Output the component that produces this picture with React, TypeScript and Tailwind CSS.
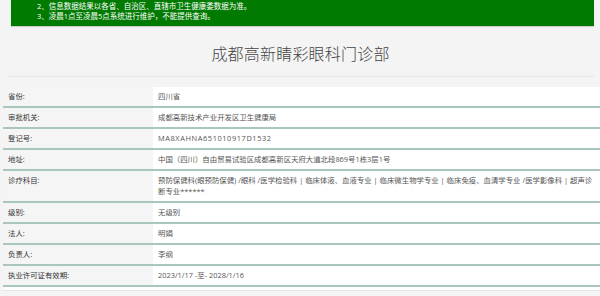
const rows: { label: string; value: string; wide?: boolean }[] = [
  { label: "省份:", value: "四川省" },
  { label: "审批机关:", value: "成都高新技术产业开发区卫生健康局" },
  { label: "登记号:", value: "MA8XAHNA651010917D1532", wide: true },
  { label: "地址:", value: "中国（四川）自由贸易试验区成都高新区天府大道北段869号1栋3层1号" },
  {
    label: "诊疗科目:",
    value:
      "预防保健科(眼预防保健) /眼科 /医学检验科 | 临床体液、血液专业 | 临床微生物学专业 | 临床免疫、血清学专业 /医学影像科 | 超声诊断专业******",
  },
  { label: "级别:", value: "无级别" },
  { label: "法人:", value: "明娟" },
  { label: "负责人:", value: "李纲" },
  { label: "执业许可证有效期:", value: "2023/1/17 -至- 2028/1/16" },
];

export default function App() {
  return (
    <div
      className="w-[600px] h-[296px] overflow-hidden bg-[#f4f4f4]"
      style={{ fontFamily: '"Open Sans", "Noto Sans CJK SC", sans-serif' }}
    >
      {/* notice banner, first line scrolled out of view */}
      <div className="ml-[11px] mr-[6px] bg-[#007a00] pl-[26px] pt-px pb-[5px] text-white text-[7.5px] leading-[10px] shadow-[0_1px_1px_rgba(0,0,0,0.15)]">
        <p>2、信息数据结果以各省、自治区、直辖市卫生健康委数据为准。</p>
        <p>3、凌晨1点至凌晨5点系统进行维护，不能提供查询。</p>
      </div>

      <div className="ml-[7px] mr-[6px] h-[51px] flex items-center justify-center border-b border-[#e6e6e6] pt-[5px]">
        <h1 className="text-[16px] font-light text-[#444] tracking-[0.2px]">成都高新睛彩眼科门诊部</h1>
      </div>

      <div className="mt-[10px] ml-[3px] text-[7.4px] leading-[11px]">
        {rows.map((r) => (
          <div key={r.label} className="flex border-b-2 border-[#a9c7bd]">
            <div className="w-[150px] shrink-0 bg-[#f5f5f5] pl-[5px] py-[4px] text-[#333]">{r.label}</div>
            <div
              className={
                "flex-1 bg-white pl-[5px] pr-[3px] py-[4px] text-[#555]" + (r.wide ? " tracking-[0.6px]" : "")
              }
            >
              {r.value}
            </div>
          </div>
        ))}
        <div className="h-[4px] bg-white border-b border-[#e2e5ec]" />
      </div>
    </div>
  );
}
